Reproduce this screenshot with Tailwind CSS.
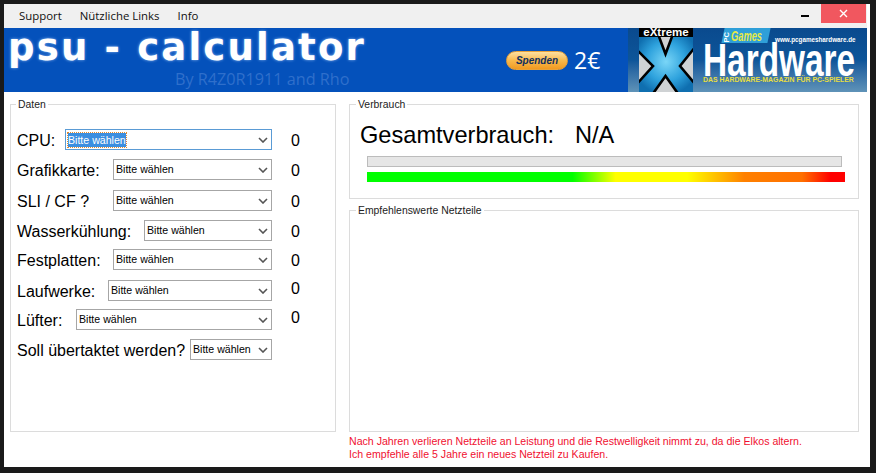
<!DOCTYPE html>
<html lang="de">
<head>
<meta charset="UTF-8">
<script src="https://cdn.jsdelivr.net/npm/@tailwindcss/browser@4"></script>
<title>PSU Calculator</title>
</head>
<body class="bg-[#1a1a1a] w-[876px] h-[473px] overflow-hidden font-['Liberation_Sans',Arial,sans-serif] text-black">

<!-- Window -->
<div class="ml-1 mt-1 w-[866px] h-[463px] bg-white flex flex-col">

	<!-- Menu bar -->
	<div class="h-6 mr-[3px] pr-[1px] bg-[#f0f0f0] flex items-start justify-between shrink-0">
		<div class="flex pl-[15px] pt-[3px] gap-[18px] font-['Open_Sans',sans-serif] text-[11.4px] leading-[18px] text-[#111]">
			<span>Support</span>
			<span>Nützliche Links</span>
			<span>Info</span>
		</div>
		<div class="flex items-start">
			<div class="w-[8px] h-[2px] bg-black mt-[11px] mr-[12px]"></div>
			<div class="w-[45px] h-[19px] bg-[#f1575f] flex items-center justify-center">
				<svg width="9" height="9" viewBox="0 0 9 9"><path d="M1 1l7 7M8 1l-7 7" stroke="#fff" stroke-width="1.4"/></svg>
			</div>
		</div>
	</div>

	<!-- Banner -->
	<div class="h-16 mr-[3px] bg-[#0451bb] flex shrink-0">
		<div class="w-[502px] shrink-0 pl-[4px] flex flex-col">
			<div class="font-['DejaVu_Sans',sans-serif] font-bold text-white text-[37px] leading-[40px] tracking-[2.2px] [text-shadow:0_0_3px_#8fb8f0] whitespace-nowrap">psu - calculator</div>
			<div class="font-['Open_Sans',sans-serif] text-[#2f6fcb] text-[16.2px] leading-5 pl-[167px] mt-[1px] whitespace-nowrap">By R4Z0R1911 and Rho</div>
		</div>
		<div class="flex items-start pt-[23px] w-[122px] shrink-0">
			<div class="w-[62px] h-[19px] rounded-full border border-[#e8a23a] bg-gradient-to-b from-[#fde0a0] via-[#f8b94a] to-[#f09a20] flex items-center justify-center italic font-bold text-[10px] text-[#12305f]">Spenden</div>
			<span class="ml-[6px] font-['Open_Sans',sans-serif] text-[23px] leading-[19px] text-white">2€</span>
		</div>
		<!-- Magazine logos -->
		<div class="flex-1 flex pl-[11px] overflow-hidden bg-gradient-to-b from-[#0a4a8e] via-[#0d5599] to-[#5f93b8]">
			<div class="w-[54px] h-16 shrink-0 flex flex-col">
				<div class="h-[9px] bg-black text-white text-[11.5px] leading-[9px] font-bold text-center whitespace-nowrap">eXtreme</div>
				<svg width="54" height="55" viewBox="0 0 54 55" class="block">
					<defs><radialGradient id="xb" cx="0.5" cy="0.45" r="0.6"><stop offset="0" stop-color="#7ad6f7"/><stop offset="0.6" stop-color="#2ea2dd"/><stop offset="1" stop-color="#0f6fb0"/></radialGradient></defs>
					<rect width="54" height="55" fill="url(#xb)"/>
					<g fill="#cfd2d4" stroke="#000" stroke-width="2.6" stroke-miterlimit="10">
						<path d="M19-3L26.5 17 34-3z"/>
						<path d="M-3 12L14 29-3 48z"/>
						<path d="M57 9L41 29 57 48z"/>
						<path d="M13 58L26.5 39 40 58z"/>
					</g>
				</svg>
			</div>
			<div class="flex-1 flex flex-col pl-[10px] pr-[9px] min-w-0">
				<div class="flex items-end h-[15px] shrink-0">
					<div class="ml-[20px] w-[46px] h-[15px] bg-[#2f9fd8] -skew-x-12 flex items-end overflow-hidden">
						<div class="skew-x-12 flex items-end">
							<span class="text-white font-bold text-[7.5px] leading-[8px] [writing-mode:vertical-rl] rotate-180 mb-[1px]">PC</span>
							<span class="text-[#e6ea48] italic font-bold text-[15px] leading-[15px] origin-left scale-x-[0.62]">Games</span>
						</div>
					</div>
					<span class="ml-[6px] text-white font-bold text-[6.3px] leading-[6px] whitespace-nowrap">www.pcgameshardware.de</span>
				</div>
				<div class="h-[33px] text-white font-bold text-[47px] leading-[33px] origin-left scale-x-[0.71] whitespace-nowrap">Hardware</div>
				<div class="text-[#e8de40] font-bold text-[6.9px] leading-[7px] whitespace-nowrap">DAS HARDWARE-MAGAZIN FÜR PC-SPIELER</div>
			</div>
		</div>
	</div>

	<!-- Main -->
	<div class="flex pl-[6px] pt-[6px]">

		<!-- Daten -->
		<fieldset class="w-[326px] h-[334px] border border-[#dcdcdc] pl-[6px] pr-[63px] shrink-0">
			<legend class="-ml-[1px] px-[2px] text-[10.4px] leading-[13px] text-[#222]">Daten</legend>

			<div class="flex items-center h-[21px] mt-[18px] text-[16px]">
				<span class="flex-1 mt-[2px]">CPU:</span>
				<div class="w-[207px] h-[21px] border border-[#5a9bd5] flex items-center pl-[2px] pr-[3px] justify-between text-[10.6px]">
					<span class="bg-[#3b8ee0] text-white leading-[14px] outline-dotted outline-1 outline-[#e08a30]">Bitte wählen</span>
					<svg width="10" height="6" viewBox="0 0 10 6"><path d="M1 1l4 4 4-4" fill="none" stroke="#555" stroke-width="1.6"/></svg>
				</div>
				<span class="w-[40px] -mr-[40px] pl-[19px] shrink-0 mt-[2px]">0</span>
			</div>

			<div class="flex items-center h-[21px] mt-[9px] text-[16px]">
				<span class="flex-1 mt-[2px]">Grafikkarte:</span>
				<div class="w-[159px] h-[21px] border border-[#a6a6a6] flex items-center pl-[2px] pr-[3px] justify-between text-[10.6px]">
					<span>Bitte wählen</span>
					<svg width="10" height="6" viewBox="0 0 10 6"><path d="M1 1l4 4 4-4" fill="none" stroke="#555" stroke-width="1.6"/></svg>
				</div>
				<span class="w-[40px] -mr-[40px] pl-[19px] shrink-0 mt-[2px]">0</span>
			</div>

			<div class="flex items-center h-[21px] mt-[10px] text-[16px]">
				<span class="flex-1 mt-[2px]">SLI / CF ?</span>
				<div class="w-[159px] h-[21px] border border-[#a6a6a6] flex items-center pl-[2px] pr-[3px] justify-between text-[10.6px]">
					<span>Bitte wählen</span>
					<svg width="10" height="6" viewBox="0 0 10 6"><path d="M1 1l4 4 4-4" fill="none" stroke="#555" stroke-width="1.6"/></svg>
				</div>
				<span class="w-[40px] -mr-[40px] pl-[19px] shrink-0 mt-[2px]">0</span>
			</div>

			<div class="flex items-center h-[21px] mt-[9px] text-[16px]">
				<span class="flex-1 mt-[2px]">Wasserkühlung:</span>
				<div class="w-[128px] h-[21px] border border-[#a6a6a6] flex items-center pl-[2px] pr-[3px] justify-between text-[10.6px]">
					<span>Bitte wählen</span>
					<svg width="10" height="6" viewBox="0 0 10 6"><path d="M1 1l4 4 4-4" fill="none" stroke="#555" stroke-width="1.6"/></svg>
				</div>
				<span class="w-[40px] -mr-[40px] pl-[19px] shrink-0 mt-[2px]">0</span>
			</div>

			<div class="flex items-center h-[21px] mt-[8px] text-[16px]">
				<span class="flex-1 mt-[2px]">Festplatten:</span>
				<div class="w-[159px] h-[21px] border border-[#a6a6a6] flex items-center pl-[2px] pr-[3px] justify-between text-[10.6px]">
					<span>Bitte wählen</span>
					<svg width="10" height="6" viewBox="0 0 10 6"><path d="M1 1l4 4 4-4" fill="none" stroke="#555" stroke-width="1.6"/></svg>
				</div>
				<span class="w-[40px] -mr-[40px] pl-[19px] shrink-0 mt-[2px]">0</span>
			</div>

			<div class="flex items-center h-[21px] mt-[10px] text-[16px]">
				<span class="flex-1 mt-[2px]">Laufwerke:</span>
				<div class="w-[164px] h-[21px] border border-[#a6a6a6] flex items-center pl-[2px] pr-[3px] justify-between text-[10.6px]">
					<span>Bitte wählen</span>
					<svg width="10" height="6" viewBox="0 0 10 6"><path d="M1 1l4 4 4-4" fill="none" stroke="#555" stroke-width="1.6"/></svg>
				</div>
				<span class="w-[40px] -mr-[40px] pl-[19px] shrink-0 mb-[3px]">0</span>
			</div>

			<div class="flex items-center h-[21px] mt-[8px] text-[16px]">
				<span class="flex-1 mt-[2px]">Lüfter:</span>
				<div class="w-[196px] h-[21px] border border-[#a6a6a6] flex items-center pl-[2px] pr-[3px] justify-between text-[10.6px]">
					<span>Bitte wählen</span>
					<svg width="10" height="6" viewBox="0 0 10 6"><path d="M1 1l4 4 4-4" fill="none" stroke="#555" stroke-width="1.6"/></svg>
				</div>
				<span class="w-[40px] -mr-[40px] pl-[19px] shrink-0 mb-[3px]">0</span>
			</div>

			<div class="flex items-center h-[21px] mt-[9px] text-[16px]">
				<span class="flex-1 whitespace-nowrap mt-[2px]">Soll übertaktet werden?</span>
				<div class="w-[82px] h-[21px] border border-[#a6a6a6] flex items-center pl-[2px] pr-[3px] justify-between text-[10.6px]">
					<span>Bitte wählen</span>
					<svg width="10" height="6" viewBox="0 0 10 6"><path d="M1 1l4 4 4-4" fill="none" stroke="#555" stroke-width="1.6"/></svg>
				</div>
			</div>
		</fieldset>

		<!-- Right column -->
		<div class="ml-[13px] w-[510px] flex flex-col">
			<fieldset class="h-[101px] border border-[#dcdcdc] pl-[10px]">
				<legend class="-ml-[4px] px-[2px] text-[10.4px] leading-[13px] text-[#222]">Verbrauch</legend>
				<div class="flex text-[23.6px] leading-[28px] mt-[10px]">
					<span class="w-[215px]">Gesamtverbrauch:</span>
					<span>N/A</span>
				</div>
				<div class="ml-[7px] mt-[7px] w-[475px] h-[11px] bg-[#e6e6e6] border border-[#bcbcbc]"></div>
				<div class="ml-[7px] mt-[5px] w-[478px] h-[10px] bg-[linear-gradient(to_right,#00ff00_0%,#00ff00_43%,#ffff00_52%,#ffff00_67%,#ff8000_79%,#ff7000_91%,#ff0000_97%)]"></div>
			</fieldset>
			<fieldset class="h-[228px] mt-[5px] border border-[#dcdcdc]">
				<legend class="ml-[6px] px-[2px] text-[10.4px] leading-[13px] text-[#222]">Empfehlenswerte Netzteile</legend>
			</fieldset>
			<div class="mt-[3px] text-[10.6px] leading-[13px] text-[#f01030]">
				<p>Nach Jahren verlieren Netzteile an Leistung und die Restwelligkeit nimmt zu, da die Elkos altern.</p>
				<p>Ich empfehle alle 5 Jahre ein neues Netzteil zu Kaufen.</p>
			</div>
		</div>
	</div>
</div>
</body>
</html>
